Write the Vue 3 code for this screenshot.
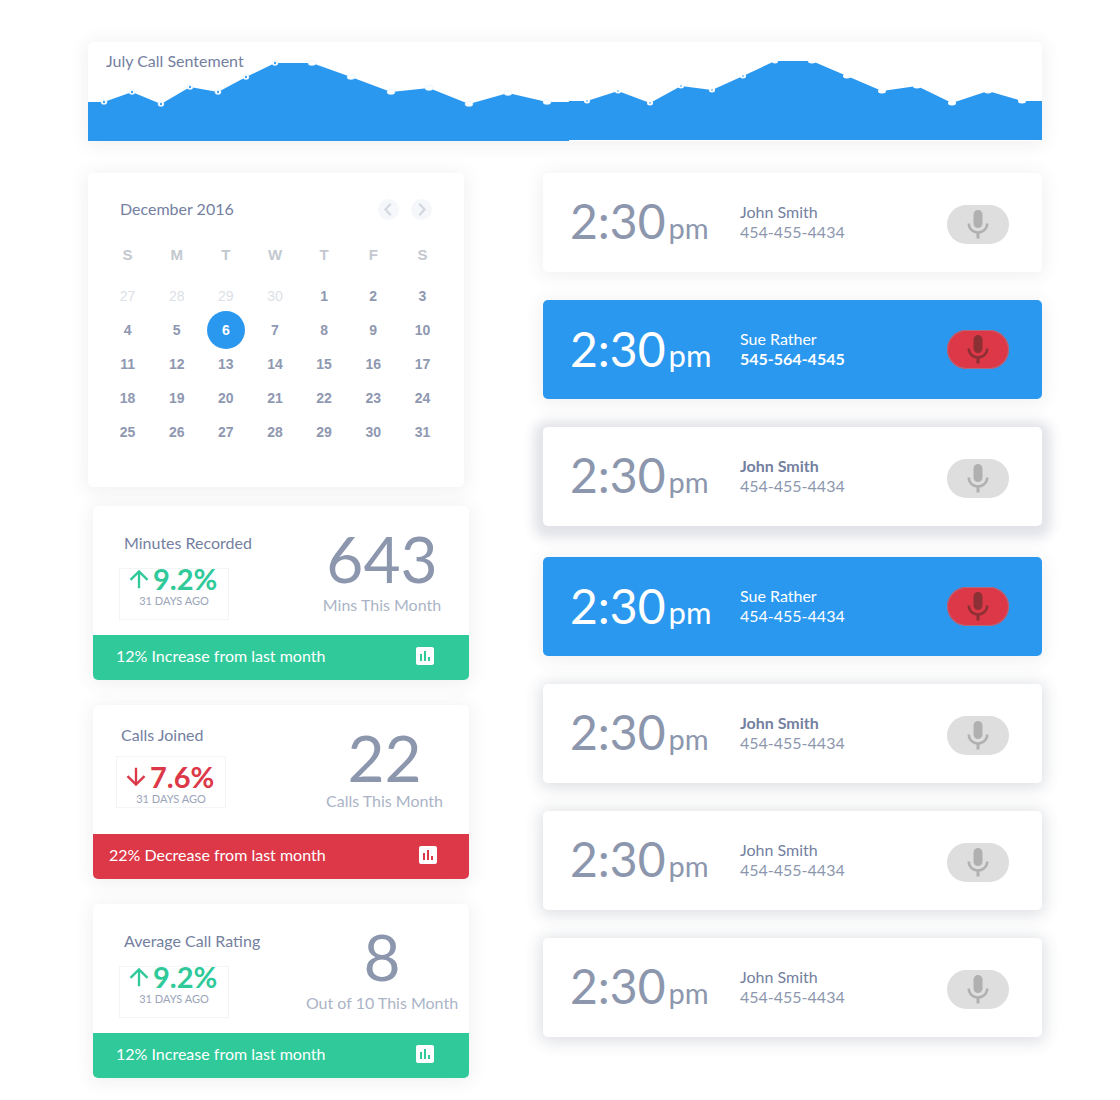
<script setup>
const weekdays = ['S', 'M', 'T', 'W', 'T', 'F', 'S']

// Five weeks, starting on 27 November
const weeks = Array.from({ length: 5 }, (_, w) =>
  Array.from({ length: 7 }, (_, d) => {
    const n = w * 7 + d - 3
    return { day: n < 1 ? n + 30 : n, outside: n < 1, selected: n === 6 }
  })
)

const stats = [
  { title: 'Minutes Recorded', change: '9.2%', up: true, value: '643', caption: 'Mins This Month', note: '12% Increase from last month' },
  { title: 'Calls Joined', change: '7.6%', up: false, value: '22', caption: 'Calls This Month', note: '22% Decrease from last month' },
  { title: 'Average Call Rating', change: '9.2%', up: true, value: '8', caption: 'Out of 10 This Month', note: '12% Increase from last month' }
]

const calls = [
  { name: 'John Smith', phone: '454-455-4434' },
  { name: 'Sue Rather', phone: '545-564-4545', live: true, strongPhone: true },
  { name: 'John Smith', phone: '454-455-4434', raised: true, strongName: true },
  { name: 'Sue Rather', phone: '454-455-4434', live: true },
  { name: 'John Smith', phone: '454-455-4434', lifted: true, strongName: true },
  { name: 'John Smith', phone: '454-455-4434', lifted: true },
  { name: 'John Smith', phone: '454-455-4434', lifted: true }
]

const firstHalf = [[16, 60], [44, 50], [73, 62], [102, 45], [130, 50], [158, 35], [187, 21], [224, 21], [263, 35], [303, 50], [341, 46], [381, 62], [420, 51], [459, 60]]
const secondHalf = [[499, 59], [530, 49], [562, 61], [593, 44], [624, 48], [655, 34], [687, 19], [724, 19], [759, 34], [794, 49], [829, 44], [864, 61], [900, 49], [934, 59]]
const join = (pts) => pts.map((p) => p.join(',')).join(' ')
const firstArea = `0,99 0,60 ${join(firstHalf)} 481,60 481,99`
const secondArea = `481,98 481,59 ${join(secondHalf)} 954,59 954,98`
</script>

<template>
  <main class="page">
    <section class="card sentiment">
      <h2 class="heading sentiment-title">July Call Sentement</h2>
      <svg class="sentiment-chart" viewBox="0 0 954 99" preserveAspectRatio="none" aria-hidden="true">
        <polygon :points="firstArea" fill="#2b98f0" />
        <polygon :points="secondArea" fill="#2b98f0" />
        <g v-for="(p, i) in firstHalf" :key="'a' + i">
          <ellipse :cx="p[0]" :cy="p[1]" :rx="i < 7 ? 3 : 4" ry="2.5" fill="#fff" stroke="#d5eafc" stroke-width=".5" />
          <ellipse v-if="i < 7" :cx="p[0]" :cy="p[1]" rx="1" ry="1.3" fill="#2b98f0" />
        </g>
        <g v-for="(p, i) in secondHalf" :key="'b' + i">
          <ellipse :cx="p[0]" :cy="p[1]" :rx="i < 7 ? 3 : 4" ry="2.5" fill="#fff" />
          <ellipse v-if="i < 6" :cx="p[0]" :cy="p[1]" rx=".6" ry="1" fill="#2b98f0" />
        </g>
      </svg>
    </section>

    <div class="columns">
      <div class="left">
        <section class="card calendar">
          <header class="calendar-head">
            <h2 class="heading">December 2016</h2>
            <nav class="calendar-nav">
              <button type="button" class="round" aria-label="Previous month">
                <svg viewBox="0 0 24 24"><path d="M14.5 5.5 8.5 12l6 6.5" /></svg>
              </button>
              <button type="button" class="round" aria-label="Next month">
                <svg viewBox="0 0 24 24"><path d="M9.5 5.5 15.5 12l-6 6.5" /></svg>
              </button>
            </nav>
          </header>
          <table class="month">
            <thead>
              <tr><th v-for="(d, i) in weekdays" :key="i" scope="col">{{ d }}</th></tr>
            </thead>
            <tbody>
              <tr v-for="(week, w) in weeks" :key="w">
                <td v-for="(cell, d) in week" :key="d">
                  <span class="day" :class="{ outside: cell.outside, selected: cell.selected }">{{ cell.day }}</span>
                </td>
              </tr>
            </tbody>
          </table>
        </section>

        <section v-for="s in stats" :key="s.title" class="card stat" :class="s.up ? 'up' : 'down'">
          <div class="stat-body">
            <div class="trend">
              <h2 class="heading">{{ s.title }}</h2>
              <div class="change">
                <div class="change-value">
                  <svg class="arrow" viewBox="0 0 24 24" aria-hidden="true">
                    <path v-if="s.up" d="M4 12l1.41 1.41L11 7.83V20h2V7.83l5.58 5.59L20 12l-8-8-8 8z" />
                    <path v-else d="M20 12l-1.41-1.41L13 16.17V4h-2v12.17l-5.58-5.59L4 12l8 8 8-8z" />
                  </svg>
                  <span>{{ s.change }}</span>
                </div>
                <div class="change-age">31 DAYS AGO</div>
              </div>
            </div>
            <div class="total">
              <div class="total-value">{{ s.value }}</div>
              <div class="total-caption">{{ s.caption }}</div>
            </div>
          </div>
          <footer class="stat-foot">
            <span>{{ s.note }}</span>
            <svg class="bars" viewBox="0 0 24 24" aria-hidden="true">
              <path d="M19 3H5c-1.1 0-2 .9-2 2v14c0 1.1.9 2 2 2h14c1.1 0 2-.9 2-2V5c0-1.1-.9-2-2-2zM9 17H7v-7h2v7zm4 0h-2V7h2v10zm4 0h-2v-4h2v4z" />
            </svg>
          </footer>
        </section>
      </div>

      <div class="calls">
        <article
          v-for="(c, i) in calls"
          :key="i"
          class="card call"
          :class="{ live: c.live, raised: c.raised, lifted: c.lifted }"
        >
          <div class="time">2:30<span class="meridiem">pm</span></div>
          <div class="person">
            <div class="name" :class="{ strong: c.strongName }">{{ c.name }}</div>
            <div class="phone" :class="{ strong: c.strongPhone }">{{ c.phone }}</div>
          </div>
          <button type="button" class="mic" aria-label="Record call">
            <svg viewBox="0 0 24 24" aria-hidden="true">
              <path d="M12 14c1.66 0 2.99-1.34 2.99-3L15 5c0-1.66-1.34-3-3-3S9 3.34 9 5v6c0 1.66 1.34 3 3 3zm5.3-3c0 3-2.54 5.1-5.3 5.1S6.7 14 6.7 11H5c0 3.41 2.72 6.23 6 6.72V21h2v-3.28c3.28-.48 6-3.3 6-6.72h-1.7z" />
            </svg>
          </button>
        </article>
      </div>
    </div>
  </main>
</template>

<style>
body {
  margin: 0;
  background: #fff;
}
</style>

<style scoped>
.page {
  box-sizing: border-box;
  padding: 42px 78px 22px 88px;
  font-family: Lato, "Liberation Sans", sans-serif;
  font-size: 16px;
  line-height: 20px;
  color: #8c97ae;
}

.card {
  border-radius: 5px;
  background: #fff;
  box-shadow: 0 2px 18px 2px rgba(60, 70, 90, 0.08);
}

.heading {
  margin: 0;
  font-size: 16px;
  font-weight: 400;
  line-height: 20px;
  color: #74809f;
}

button {
  padding: 0;
  border: 0;
  cursor: pointer;
}

.sentiment {
  display: grid;
  margin-bottom: 32px;
}

.sentiment-title,
.sentiment-chart {
  grid-area: 1 / 1;
}

.sentiment-title {
  z-index: 1;
  padding: 9px 18px;
}

.sentiment-chart {
  display: block;
  width: 100%;
  height: 99px;
}

.columns {
  display: grid;
  grid-template-columns: 381fr 499fr;
  gap: 74px;
  align-items: start;
}

.left {
  display: flex;
  flex-direction: column;
  gap: 25px;
}

.calendar {
  box-sizing: border-box;
  min-height: 314px;
  margin: 0 5px -6px 0;
  padding: 26px 17px 20px 15px;
}

.calendar-head {
  display: flex;
  justify-content: space-between;
  align-items: flex-start;
  padding: 0 15px 0 17px;
}

.calendar-nav {
  display: flex;
  gap: 12px;
}

.round {
  width: 21px;
  height: 21px;
  border-radius: 50%;
  background: #f6f7fb;
}

.round svg {
  display: block;
  width: 21px;
  height: 21px;
  fill: none;
  stroke: #d3d7e0;
  stroke-width: 2.5;
}

.month {
  width: 100%;
  margin-top: 18px;
  border-collapse: collapse;
  table-layout: fixed;
  font-family: "Liberation Sans", Arial, sans-serif;
  text-align: center;
}

.month th {
  height: 34px;
  padding: 0 0 7px;
  font-size: 15px;
  font-weight: 700;
  color: #c3c8d0;
}

.month td {
  height: 34px;
  padding: 0;
}

.day {
  display: inline-block;
  width: 38px;
  margin: -2px;
  border-radius: 50%;
  font-size: 14px;
  font-weight: 700;
  line-height: 38px;
  vertical-align: middle;
  color: #8f98b1;
}

.day.outside {
  font-weight: 400;
  color: #dcdfe6;
}

.day.selected {
  background: #2b98f0;
  color: #fff;
}

.stat {
  margin-left: 5px;
  overflow: hidden;
}

.stat-body {
  display: grid;
  grid-template-columns: 1fr 174px;
  min-height: 129px;
}

.trend {
  padding: 27px 0 0 26px;
}

.trend .heading {
  padding-left: 5px;
}

.change {
  box-sizing: border-box;
  width: 110px;
  height: 52px;
  margin-top: 15px;
  padding-left: 5px;
  border: 1px solid #f3f4f6;
}

.change-value {
  display: flex;
  align-items: center;
  height: 20px;
  font-size: 29px;
  font-weight: 700;
  color: #30c99a;
}

.arrow {
  width: 28px;
  height: 28px;
  fill: currentColor;
}

.change-age {
  padding: 2px 5px 0 0;
  font-size: 11px;
  text-align: center;
  color: #9aa4b9;
}

.total {
  padding-top: 21px;
  text-align: center;
}

.total-value {
  font-size: 64px;
  line-height: 64px;
  color: #8c97ae;
}

.total-caption {
  margin-top: 4px;
  color: #abb4c6;
}

.down .trend {
  padding: 20px 0 0 23px;
}

.down .change {
  margin-top: 11px;
  padding-top: 10px;
}

.down .change-value {
  color: #dc3848;
}

.down .total {
  padding-left: 5px;
}

.down .total-caption {
  margin-top: 1px;
}

.stat-foot {
  display: flex;
  justify-content: space-between;
  align-items: center;
  box-sizing: border-box;
  height: 45px;
  padding: 0 32px 4px 23px;
  background: #30c99a;
  color: #fff;
}

.down .stat-foot {
  padding: 0 29px 4px 16px;
  background: #dc3848;
}

.bars {
  width: 24px;
  height: 24px;
  fill: #fff;
}

.calls {
  display: flex;
  flex-direction: column;
  gap: 28px;
}

.call {
  display: grid;
  grid-template-columns: 170px 1fr 62px;
  align-items: center;
  box-sizing: border-box;
  height: 99px;
  padding: 0 33px 0 27px;
}

.time {
  padding-top: 4px;
  font-size: 48px;
  line-height: 48px;
  white-space: nowrap;
  color: #8c97ae;
}

.meridiem {
  margin-left: 3px;
  font-size: 29px;
}

.person {
  padding-bottom: 2px;
}

.name {
  color: #74809f;
}

.strong {
  font-weight: 700;
}

.mic {
  width: 62px;
  height: 39px;
  margin-top: 4px;
  border-radius: 20px;
  background: #dedede;
}

.mic svg {
  display: block;
  width: 36px;
  height: 36px;
  margin: 0 auto;
  fill: #b0b0b0;
}

.lifted {
  box-shadow: 0 2px 16px 3px rgba(50, 60, 90, 0.16);
}

.raised {
  margin-bottom: 3px;
  box-shadow: 0 3px 12px 9px rgba(50, 60, 90, 0.14);
}

.live {
  background: #2b98f0;
}

.live .time,
.live .name,
.live .phone {
  color: #fff;
}

.live .meridiem {
  font-size: 31px;
}

.live .mic {
  margin-top: 0;
  box-shadow: inset 0 0 0 1px #b06a7c;
  background: #dc3848;
}

.live .mic svg {
  fill: #8b3034;
}
</style>
